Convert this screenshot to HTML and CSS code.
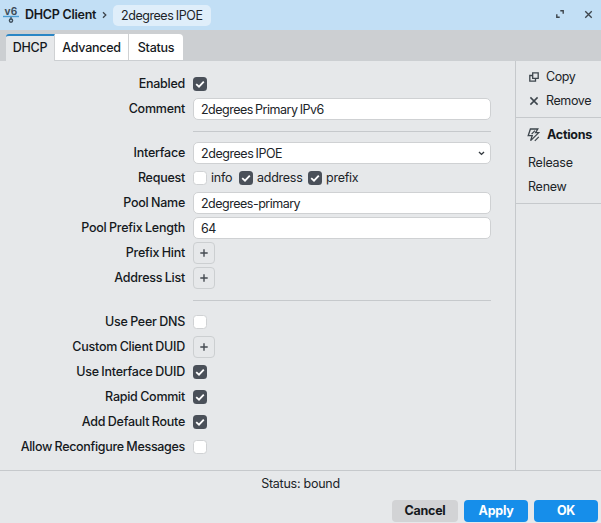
FILE: index.html
```html
<!DOCTYPE html>
<html lang="en">
<head>
<meta charset="utf-8">
<title>DHCP Client</title>
<link rel="stylesheet" href="styles.css">
</head>
<body>
<svg class="defs" width="0" height="0" aria-hidden="true">
  <symbol id="check" viewBox="0 0 14 14"><path d="M3.2 7.1 6 9.7 10.8 4.7" fill="none" stroke="#fff" stroke-width="1.8"/></symbol>
  <symbol id="plus" viewBox="0 0 20 20"><path d="M10 6.3v7.4M6.3 10h7.4" fill="none" stroke="#454b52" stroke-width="1.4"/></symbol>
  <symbol id="cross" viewBox="0 0 10 10"><path d="M1.4 1.4l7.2 7.2M8.6 1.4 1.4 8.6" fill="none" stroke="#3d454c" stroke-width="1.5"/></symbol>
</svg>
<div class="window">
  <header class="titlebar">
    <div class="logo"><span class="logo-text">v6</span>
      <svg width="16" height="9" viewBox="0 0 16 9"><path d="M0 1.5h16" stroke="#4a9bd0" stroke-width="1.4"/><path d="M8 2v2" stroke="#3d4d5a" stroke-width="1.3"/><circle cx="8" cy="5.6" r="1.6" fill="none" stroke="#3d4d5a" stroke-width="1.4"/></svg>
    </div>
    <b class="title">DHCP Client</b>
    <svg class="chev" width="5" height="8" viewBox="0 0 5 8"><path d="M1 1.2 3.8 4 1 6.8" fill="none" stroke="#3d454c" stroke-width="1.3"/></svg>
    <span class="crumb">2degrees IPOE</span>
    <svg class="max" width="8" height="8" viewBox="0 0 8 8"><path d="M4.3.8h2.9v2.9M.8 4.3v2.9h2.9" fill="none" stroke="#3d454c" stroke-width="1.4"/></svg>
    <svg width="9" height="9"><use href="#cross"/></svg>
  </header>
  <nav class="tabs">
    <div class="tab active"><span>DHCP</span></div>
    <div class="tab advanced"><span>Advanced</span></div>
    <div class="tab status-tab"><span>Status</span></div>
  </nav>
  <main class="body">
    <section class="form">
      <div class="row"><label>Enabled</label><i class="box on"><svg><use href="#check"/></svg></i></div>
      <div class="row"><label>Comment</label><div class="input">2degrees Primary IPv6</div></div>
      <div class="sep"></div>
      <div class="row"><label>Interface</label><div class="input select"><span>2degrees IPOE</span><svg width="7" height="5" viewBox="0 0 7 5"><path d="M1 1l2.5 2.4L6 1" fill="none" stroke="#33393f" stroke-width="1.4"/></svg></div></div>
      <div class="row"><label>Request</label><div class="checks"><i class="box"></i><span class="info">info</span><i class="box on"><svg><use href="#check"/></svg></i><span class="address">address</span><i class="box on"><svg><use href="#check"/></svg></i><span>prefix</span></div></div>
      <div class="row"><label>Pool Name</label><div class="input">2degrees-primary</div></div>
      <div class="row"><label>Pool Prefix Length</label><div class="input">64</div></div>
      <div class="row"><label>Prefix Hint</label><div class="add"><svg><use href="#plus"/></svg></div></div>
      <div class="row"><label>Address List</label><div class="add"><svg><use href="#plus"/></svg></div></div>
      <div class="sep"></div>
      <div class="row"><label>Use Peer DNS</label><i class="box"></i></div>
      <div class="row"><label>Custom Client DUID</label><div class="add"><svg><use href="#plus"/></svg></div></div>
      <div class="row"><label>Use Interface DUID</label><i class="box on"><svg><use href="#check"/></svg></i></div>
      <div class="row"><label>Rapid Commit</label><i class="box on"><svg><use href="#check"/></svg></i></div>
      <div class="row"><label>Add Default Route</label><i class="box on"><svg><use href="#check"/></svg></i></div>
      <div class="row"><label class="tight">Allow Reconfigure Messages</label><i class="box"></i></div>
    </section>
    <aside class="side">
      <div class="group">
        <div class="item icon-item"><svg width="10" height="10" viewBox="0 0 10 10"><path d="M3.7.8h5.5v5.5H3.7zM3.5 3.5H.8v5.7h5.7V6.5" fill="none" stroke="#3d454c" stroke-width="1.3"/></svg><span>Copy</span></div>
        <div class="item icon-item"><svg width="10" height="10"><use href="#cross"/></svg><span>Remove</span></div>
      </div>
      <div class="group">
        <div class="item heading"><svg width="13" height="14" viewBox="0 0 13 14"><path d="M3.4 1h7.4L8.6 4.6h3.2L3.6 12.6l1.6-4.9H1.2z" fill="none" stroke="#3d454c" stroke-width="1.3"/><path d="M4.6 6.2 8 2.6M7.8 12.8l4-4" stroke="#3d454c" stroke-width="1.2"/></svg><b>Actions</b></div>
        <div class="item"><span>Release</span></div>
        <div class="item"><span>Renew</span></div>
      </div>
    </aside>
  </main>
  <footer class="footer">
    <div class="state"><span>Status: bound</span></div>
    <div class="buttons"><div class="btn cancel">Cancel</div><div class="btn">Apply</div><div class="btn">OK</div></div>
  </footer>
</div>
</body>
</html>
```
FILE: styles.css
```css
* { box-sizing: border-box; }
body { margin: 0; background: #e6e8ea; font: 12.5px/20px Inter, "Liberation Sans", sans-serif; letter-spacing: -0.25px; color: #202428; }
svg { display: block; flex: none; }
.defs { position: absolute; }
.window { width: 601px; height: 523px; display: flex; flex-direction: column; overflow: hidden; }
.titlebar { height: 30px; flex: none; background: #c2dff5; display: flex; align-items: center; padding: 0 8px 2px 3px; }
.logo { width: 16px; margin: 3px 6px 0 0; }
.logo-text { display: block; font: 700 10px/8px Inter, sans-serif; letter-spacing: 0.3px; text-align: center; color: #3d4d5a; }
.title { font-weight: 600; color: #15191d; width: 71px; margin-top: 2px; white-space: nowrap; }
.chev { margin: 2px 6px 0 6px; }
.crumb { height: 21px; margin-top: 2px; padding: 0 8px; width: 98px; border-radius: 5px; background: #dfeefa; line-height: 21px; letter-spacing: -0.45px; word-spacing: -0.5px; white-space: nowrap; }
.max { margin: 0 20px 0 auto; }
.tabs { height: 31px; flex: none; background: #cccfd2; display: flex; padding: 4px 0 0 6px; }
.tab { height: 26px; background: #fff; text-align: center; line-height: 27px; font-weight: 500; color: #15191d; border-right: 1px solid #cfd1d3; width: 74px; white-space: nowrap; }
.active { width: 49px; height: 27px; background: #e6e8ea; border-top: 2px solid #2b86c5; line-height: 23px; border-radius: 3px 0 0; }
.status-tab { width: 54px; border-right: 0; border-radius: 0 4px 0 0; }
.body { height: 409px; flex: none; display: flex; }
.form { width: 515px; padding-top: 10px; }
.row { height: 25px; padding: 2px 24px 1px 0; display: flex; align-items: center; }
label { width: 185px; margin-right: 8px; text-align: right; font-weight: 500; color: #15191d; word-spacing: -0.5px; white-space: nowrap; }
.tight { letter-spacing: -0.31px; }
.input { width: 298px; height: 22px; border: 1px solid #cfd1d3; border-radius: 5px; background: #fff; padding: 1px 7px 0; line-height: 20px; letter-spacing: -0.5px; word-spacing: -0.8px; }
.select { display: flex; justify-content: space-between; align-items: center; padding-right: 5px; letter-spacing: -0.45px; }
.sep { height: 19px; margin-left: 193px; width: 298px; padding-top: 10px; }
.sep::before { content: ""; display: block; height: 1px; background: #c6c9cc; }
.box { width: 14px; height: 14px; flex: none; border: 1px solid #d0d2d4; border-radius: 3.5px; background: #fff; }
.on { border: 0; background: #4a5059; }
.on svg { width: 14px; height: 14px; }
.checks { display: flex; align-items: center; }
.checks span { margin-left: 4px; }
.info { width: 28px; }
.address { width: 51px; }
.add { width: 22px; height: 22px; border: 1px solid #cccfd1; border-radius: 4px; }
.add svg { width: 20px; height: 20px; }
.side { width: 86px; border-left: 1px solid #c6c9cc; }
.group { padding: 4px 0 4px 12px; border-bottom: 1px solid #c6c9cc; }
.item { height: 24px; display: flex; align-items: center; white-space: nowrap; }
.icon-item { padding-left: 1px; gap: 7px; letter-spacing: -0.4px; }
.heading { margin: 1px 0 4px -1px; gap: 7px; color: #15191d; }
.heading b { font-weight: 700; }
.footer { flex: 1; border-top: 1px solid #c6c9cc; }
.state { text-align: center; height: 29px; padding-top: 3px; }
.buttons { display: flex; justify-content: flex-end; gap: 6px; padding-right: 3px; }
.btn { width: 64px; height: 22px; border-radius: 4px; background: #168eea; color: #fff; text-align: center; line-height: 21px; font-weight: 700; }
.cancel { width: 66px; background: #d2d3d5; color: #15191d; }
```
